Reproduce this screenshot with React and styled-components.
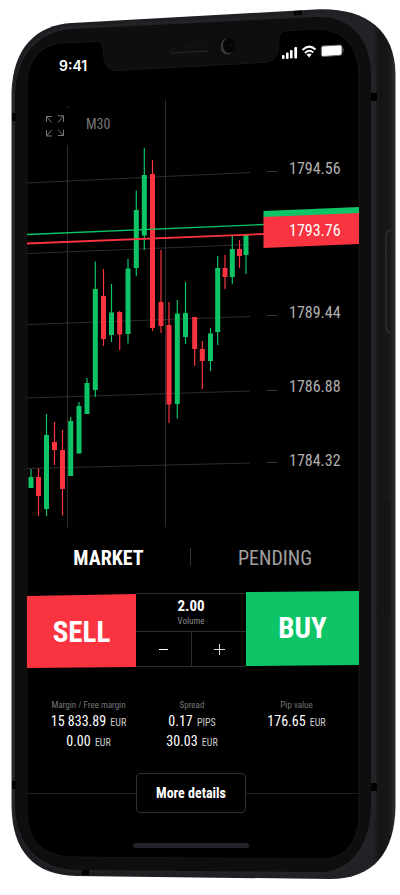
import React, { useState } from 'react'
import styled, { createGlobalStyle } from 'styled-components'

const GREEN = '#0dc566'
const RED = '#fa3340'

// x, high, body top, body bottom, low, up / down
const candles = [
  [31, 469, 477, 488, 488, 'up'],
  [38.5, 468.5, 477, 496, 516, 'down'],
  [46.5, 414, 435, 509, 516, 'up'],
  [54.5, 422, 442, 450, 465, 'down'],
  [62.5, 430, 450, 489, 515.5, 'down'],
  [70.7, 417, 421, 476, 476, 'up'],
  [79, 402, 406, 453.5, 453.5, 'up'],
  [87, 378, 383, 414, 414, 'up'],
  [95.3, 261.5, 289, 390, 397, 'up'],
  [103.5, 269, 296, 339, 346, 'down'],
  [111.5, 284, 312.5, 335, 342, 'up'],
  [119.7, 311, 312, 334.5, 350, 'down'],
  [128, 259, 268.5, 334, 343.5, 'up'],
  [136.3, 190.5, 210, 268, 276, 'up'],
  [144.3, 148, 175, 235.5, 250, 'up'],
  [152.5, 160, 174, 328, 331, 'down'],
  [161, 250, 302, 326, 333, 'down'],
  [169, 302, 325, 404.5, 423, 'down'],
  [177.3, 300, 313.5, 404, 418.5, 'up'],
  [185.5, 282, 313, 337, 344, 'up'],
  [194.7, 317, 317, 349, 366, 'down'],
  [202.3, 341, 349, 361, 389, 'down'],
  [210.5, 328, 333.5, 361, 371, 'up'],
  [217.7, 256, 268, 332, 345, 'up'],
  [225, 255, 268, 277, 289, 'down'],
  [232.3, 236, 249, 277, 284, 'up'],
  [239.5, 240, 249, 256, 268, 'down'],
  [246, 235, 235, 255, 274, 'up'],
]

const gridLines = [
  [183, 172.5],
  [253.5, 244.5],
  [324.5, 316.5],
  [398, 391],
  [468.5, 463],
]

const prices = [
  { value: '1794.56', y: 174, tick: 171.5 },
  { value: '1789.44', y: 318, tick: 315.5 },
  { value: '1786.88', y: 392, tick: 390.5 },
  { value: '1784.32', y: 466, tick: 462.5 },
]

const stats = [
  { label: 'Margin / Free margin', values: [['15 833.89', 'EUR'], ['0.00', 'EUR']] },
  { label: 'Spread', values: [['0.17', 'PIPS'], ['30.03', 'EUR']] },
  { label: 'Pip value', values: [['176.65', 'EUR']] },
]

const DeviceFrame = () => (
  <FrameSvg viewBox="0 0 400 895" preserveAspectRatio="none" aria-hidden="true">
    <defs>
      <linearGradient id="side" x1="0" x2="1" y1="0" y2="0">
        <stop offset="0" stopColor="#2a2d31" />
        <stop offset="0.012" stopColor="#1b1d20" />
        <stop offset="0.94" stopColor="#222226" />
        <stop offset="0.96" stopColor="#141415" />
        <stop offset="0.985" stopColor="#19191a" />
        <stop offset="1" stopColor="#303031" />
      </linearGradient>
    </defs>
    <path d="M11.500 92C13 48 36 25 72 23L315 9.500C362 7 395 27 395.500 74V806C395 852 374 879 330 879L76 876C34 875 12 851 11.500 806Z" fill="url(#side)" />
    <path d="M14 94C15 54 38 28 72 26L318 13C352 12 374 34 376 74V806C375 848 354 875 322 875L76 872C40 871 15 847 14 806Z" fill="#222327" />
    <path d="M15 94C16 56 38 31 72 29L318 17C348 16 370 36 371 74V806C370 846 350 872 320 872L76 870C40 869 16 846 15 806Z" fill="#0e0e0e" />
    <path
      d="M27 84C28 58 42 45 62 43L97 41.500C105 41 102 54 105 62C107 68 111 71 117 70.500L264 62.500C283 61 277 43 280 35C281 32 284 31 288 31L312 29C342 28 358 45 359 74V818C358 842 344 858 324 859L72 857C44 856 28 842 27 813Z"
      fill="#000"
      stroke="#1d1d1e"
      strokeWidth="0.7"
    />
    <path d="M171 50Q170 54 174 53L208 51" stroke="#292929" strokeWidth="1" fill="none" />
    <path d="M171 50Q171 48 174 48L208 46" stroke="#141414" strokeWidth="1" fill="none" />
    <ellipse cx="227.300" cy="46.500" rx="6.500" ry="8" fill="#3a3a3b" />
    <ellipse cx="229" cy="45.500" rx="6" ry="7.500" fill="#050505" />
    <circle cx="231" cy="45" r="1" fill="#2a0b10" />
    <g fill="#000">
      <rect x="12" y="113" width="4" height="8" />
      <rect x="12" y="781" width="4" height="8" />
      <path d="M294 11L302 10.500V15L294 15.500Z" />
      <rect x="371" y="93" width="6" height="8" />
      <rect x="371" y="783" width="6" height="8" />
      <rect x="82" y="870" width="7" height="5" />
    </g>
    <path d="M391 230Q386 230 386 238V324Q386 332 390 333" stroke="#303033" strokeWidth="1.500" fill="none" />
    <path d="M382 610V506Q382 497 387 498Q391 499 391 507V610Q391 618 386 618Q382 618 382 610Z" fill="#151516" stroke="#1f1f20" strokeWidth="1" />
  </FrameSvg>
)

const StatusIcons = () => (
  <svg width="64" height="18" viewBox="281 42 64 18" fill="#fff" aria-hidden="true">
    <rect x="282" y="55" width="2.600" height="4" rx="1" />
    <rect x="286" y="52.500" width="2.600" height="6.500" rx="1" />
    <rect x="290" y="50" width="2.600" height="8.500" rx="1" />
    <rect x="294.300" y="47" width="2.800" height="11.500" rx="1" />
    <g fill="none" stroke="#fff" strokeWidth="2">
      <path d="M302.500 50Q309 43.500 315.500 49.500" />
      <path d="M305 53Q309 48.800 313.200 52.500" />
    </g>
    <path d="M306.500 54.500Q309 52.500 311.700 54.300L309.200 57.500Z" />
    <path d="M323 46L340 45Q342 45 342 47V53Q342 55 340 55.300L323 56.500Q321.300 56.500 321.300 54.500V48Q321.300 46 323 46Z" stroke="#666" strokeWidth="1" />
    <path d="M343 48Q344.500 50 343 52Z" fill="#777" />
  </svg>
)

const PriceChart = () => (
  <ChartSvg viewBox="27 98 332 432" role="img" aria-label="M30 price chart">
    <g stroke="#2d2d2d" strokeWidth="1">
      <path d="M67.500 106V108M67.500 145V528M165.500 100V527" />
      {gridLines.map(([left, right]) => (
        <line key={left} x1="27" y1={left} x2="250" y2={right} />
      ))}
    </g>
    {candles.map(([x, high, top, bottom, low, dir]) => (
      <Candle key={x} $dir={dir}>
        <line x1={x} x2={x} y1={high} y2={low} strokeWidth="1.2" />
        <rect x={x - 2.5} y={top} width="5" height={bottom - top} stroke="none" />
      </Candle>
    ))}
    <path d="M27 234.500L264 224.500" stroke={GREEN} strokeWidth="1.3" />
    <path d="M27 243.500L264 234" stroke={RED} strokeWidth="1.8" />
    <path d="M263.500 211L359 207V214L263.500 218Z" fill={GREEN} />
    <path d="M263.500 217L359 213V244L263.500 248Z" fill={RED} />
    {prices.map((p) => (
      <g key={p.value}>
        <line x1="267" x2="277" y1={p.tick} y2={p.tick} stroke="#333" />
        <PriceText x="289" y={p.y}>{p.value}</PriceText>
      </g>
    ))}
    <PriceText x="289" y="236" $current>1793.76</PriceText>
  </ChartSvg>
)

const App = () => {
  const [orderType, setOrderType] = useState('market')
  const [volume, setVolume] = useState('2.00')

  const changeVolume = (step) => {
    const next = Math.max(0, (parseFloat(volume) || 0) + step)
    setVolume(next.toFixed(2))
  }

  return (
    <Phone>
      <GlobalStyle />
      <DeviceFrame />
      <Screen>
        <StatusBar>
          <Clock>9:41</Clock>
          <StatusIcons />
        </StatusBar>

        <ChartArea>
          <ChartTools>
            <ExpandButton aria-label="Full screen">
              <svg width="18" height="22" viewBox="0 0 18 22" fill="none" stroke="#777" strokeWidth="1">
                <path d="M.5 7V1.500H6M.5 1.500L5.500 7.500M12 .8H17.500V7M17.500 .8L12 7.500M.5 15V21H6M.5 21L5.500 15M12 20.500H17.500V14.500M17.500 20.500L12 14.500" />
              </svg>
            </ExpandButton>
            <PeriodButton>M30</PeriodButton>
          </ChartTools>
          <PriceChart />
        </ChartArea>

        <OrderTabs>
          <OrderTab $active={orderType === 'market'} onClick={() => setOrderType('market')}>MARKET</OrderTab>
          <TabDivider />
          <OrderTab $active={orderType === 'pending'} onClick={() => setOrderType('pending')}>PENDING</OrderTab>
        </OrderTabs>

        <TradeRow>
          <SellButton>SELL</SellButton>
          <VolumeBox>
            <VolumeField>
              <VolumeInput id="volume" value={volume} onChange={(e) => setVolume(e.target.value)} />
              <VolumeLabel htmlFor="volume">Volume</VolumeLabel>
            </VolumeField>
            <Stepper>
              <StepButton aria-label="Less volume" onClick={() => changeVolume(-0.01)}>
                <svg width="11" height="11" viewBox="0 0 11 11" stroke="#fff"><path d="M1 5.500H10" /></svg>
              </StepButton>
              <StepButton aria-label="More volume" onClick={() => changeVolume(0.01)}>
                <svg width="11" height="11" viewBox="0 0 11 11" stroke="#ddd"><path d="M0 5.500H11M5.500 0V11" /></svg>
              </StepButton>
            </Stepper>
          </VolumeBox>
          <BuyButton>BUY</BuyButton>
        </TradeRow>

        <Stats>
          {stats.map((s) => (
            <Stat key={s.label}>
              <StatLabel>{s.label}</StatLabel>
              {s.values.map(([value, unit]) => (
                <StatValue key={value}>{value} <Unit>{unit}</Unit></StatValue>
              ))}
            </Stat>
          ))}
        </Stats>

        <MoreRow>
          <MoreButton>More details</MoreButton>
        </MoreRow>
        <HomeBar />
      </Screen>
    </Phone>
  )
}

const GlobalStyle = createGlobalStyle`
  * {
    box-sizing: border-box;
  }

  body {
    margin: 0;
    background: #fff;
    font-family: "Roboto Condensed", "Liberation Sans Narrow", Roboto, sans-serif;
  }

  button, input {
    font-family: inherit;
    border: none;
    padding: 0;
    margin: 0;
    background: none;
    color: inherit;
  }

  button {
    cursor: pointer;
  }
`

const Phone = styled.main`
  position: relative;
  width: 100%;
  color: #fff;
`

const FrameSvg = styled.svg`
  position: absolute;
  inset: 0;
  width: 100%;
  height: 100%;
`

const Screen = styled.div`
  position: relative;
  display: flex;
  flex-direction: column;
  padding: 42px 10.25% 47px 6.75%;
`

const StatusBar = styled.div`
  display: flex;
  justify-content: space-between;
  align-items: flex-start;
  height: 56px;
  padding: 0 14px 0 32px;
`

const Clock = styled.span`
  margin-top: 14px;
  font-family: Inter, sans-serif;
  font-size: 14px;
  line-height: 20px;
  font-weight: 600;
`

const ChartArea = styled.section`
  position: relative;
`

const ChartSvg = styled.svg`
  display: block;
  width: 100%;
  height: auto;
`

const Candle = styled.g`
  fill: ${(props) => (props.$dir === 'up' ? GREEN : RED)};
  stroke: ${(props) => (props.$dir === 'up' ? GREEN : RED)};
`

const PriceText = styled.text`
  font-size: 16px;
  fill: ${(props) => (props.$current ? '#fff' : '#b0b0b0')};
`

const ChartTools = styled.div`
  position: absolute;
  top: 16px;
  left: 19px;
  display: flex;
  align-items: flex-start;
  gap: 22px;
`

const ExpandButton = styled.button`
  display: flex;
  padding: 1px 0 0;
`

const PeriodButton = styled.button`
  font-size: 14px;
  line-height: 20px;
  color: #777;
`

const OrderTabs = styled.nav`
  display: grid;
  grid-template-columns: 163fr 1px 168fr;
  align-items: center;
  height: 54px;
`

const OrderTab = styled.button`
  padding-top: 2px;
  font-size: 20px;
  line-height: 28px;
  font-weight: ${(props) => (props.$active ? 700 : 400)};
  color: ${(props) => (props.$active ? '#fff' : '#a0a0a0')};
`

const TabDivider = styled.span`
  height: 18px;
  background: #333;
`

const TradeRow = styled.section`
  display: grid;
  grid-template-columns: 109fr 110fr 113fr;
  margin-top: 7px;
`

const TradeButton = styled.button`
  height: 77px;
  font-size: 29px;
  font-weight: 700;
`

const SellButton = styled(TradeButton)`
  padding-top: 4px;
  background: ${RED};
  clip-path: polygon(0 5px, 100% 3px, 100% 76px, 0 77px);
`

const BuyButton = styled(TradeButton)`
  padding-bottom: 4px;
  background: ${GREEN};
  clip-path: polygon(0 1px, 100% 0, 100% 74px, 0 75px);
`

const VolumeBox = styled.div`
  display: flex;
  flex-direction: column;
  margin: 2px 0 1px;
  border-top: 1px solid #2d2d2d;
  border-bottom: 1px solid #2d2d2d;
`

const VolumeField = styled.div`
  display: flex;
  flex-direction: column;
  align-items: center;
  height: 37px;
  padding-top: 3px;
`

const VolumeInput = styled.input`
  width: 100%;
  height: 18px;
  font-size: 15px;
  font-weight: 700;
  text-align: center;
`

const VolumeLabel = styled.label`
  font-size: 9px;
  line-height: 12px;
  color: #8c8c8c;
`

const Stepper = styled.div`
  flex: 1;
  display: grid;
  grid-template-columns: 1fr 1fr;
  border-top: 1px solid #2d2d2d;
`

const StepButton = styled.button`
  display: flex;
  align-items: center;
  justify-content: center;

  & + & {
    border-left: 1px solid #2d2d2d;
  }
`

const Stats = styled.section`
  display: grid;
  grid-template-columns: 123fr 84fr 125fr;
  height: 105px;
  padding-top: 30px;
`

const Stat = styled.div`
  display: flex;
  flex-direction: column;
  align-items: center;
`

const StatLabel = styled.span`
  font-size: 9px;
  line-height: 14px;
  color: #777;
`

const StatValue = styled.span`
  font-size: 14px;
  line-height: 19px;
  word-spacing: normal;
`

const Unit = styled.small`
  margin-left: 1px;
  font-size: 10px;
  color: #ccc;
`

const MoreRow = styled.div`
  display: grid;
  grid-template-columns: 109fr 110fr 113fr;
  align-items: center;

  &::before,
  &::after {
    content: '';
    height: 1px;
    background: #202024;
  }
`

const MoreButton = styled.button`
  height: 40px;
  border: 1px solid #2e2e33;
  border-radius: 4px;
  font-size: 14px;
  font-weight: 700;
  white-space: nowrap;
`

const HomeBar = styled.div`
  align-self: center;
  width: 35%;
  height: 5px;
  margin: 30px 4px 0 0;
  border-radius: 3px;
  background: #23232a;
`

export default App
